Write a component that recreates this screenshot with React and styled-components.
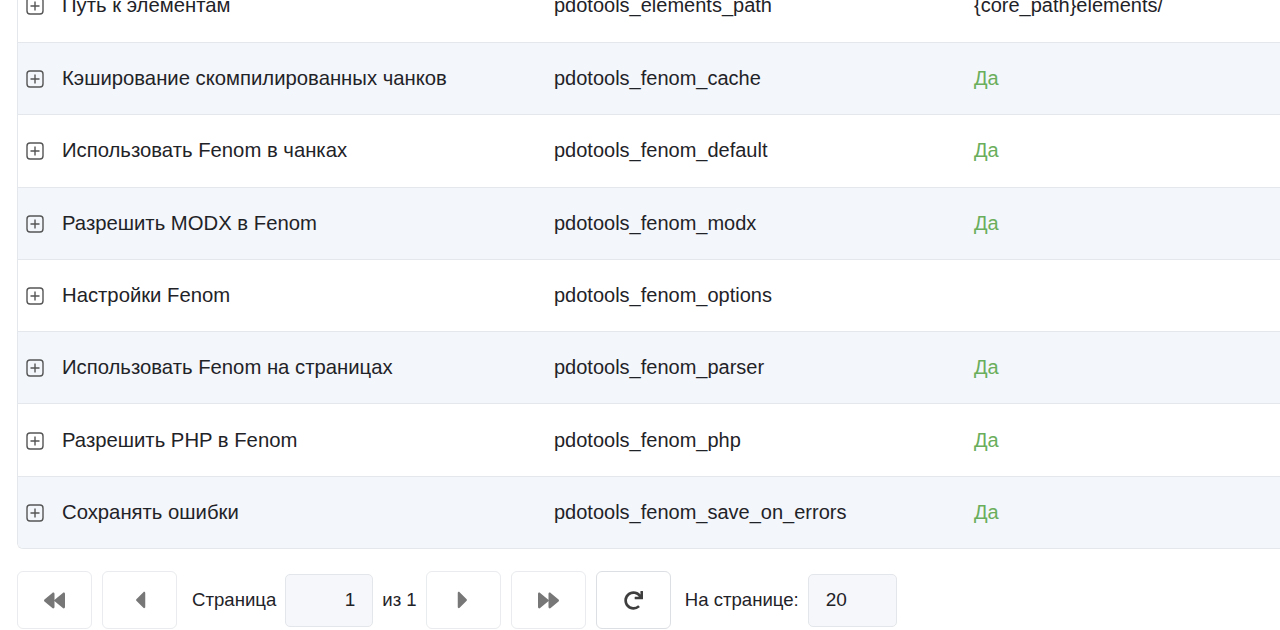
import React from 'react';
import styled, { createGlobalStyle } from 'styled-components';
import { FaBackward, FaCaretLeft, FaCaretRight, FaForward, FaRedo } from 'react-icons/fa';

const GlobalStyle = createGlobalStyle`
  html, body {
    margin: 0;
    padding: 0;
    background: #ffffff;
    overflow: hidden;
  }
  body {
    font-family: "Liberation Sans", Arial, sans-serif;
    color: #1f2328;
  }
`;

const settings = [
  { name: 'Путь к элементам', key: 'pdotools_elements_path', value: '{core_path}elements/' },
  { name: 'Кэширование скомпилированных чанков', key: 'pdotools_fenom_cache', value: 'Да', yes: true },
  { name: 'Использовать Fenom в чанках', key: 'pdotools_fenom_default', value: 'Да', yes: true },
  { name: 'Разрешить MODX в Fenom', key: 'pdotools_fenom_modx', value: 'Да', yes: true },
  { name: 'Настройки Fenom', key: 'pdotools_fenom_options', value: '' },
  { name: 'Использовать Fenom на страницах', key: 'pdotools_fenom_parser', value: 'Да', yes: true },
  { name: 'Разрешить PHP в Fenom', key: 'pdotools_fenom_php', value: 'Да', yes: true },
  { name: 'Сохранять ошибки', key: 'pdotools_fenom_save_on_errors', value: 'Да', yes: true },
];

function App() {
  return (
    <>
      <GlobalStyle />
      <Page>
        <Grid>
          {settings.map((s, i) => (
            <Row key={s.key} $striped={i % 2 === 1} $first={i === 0}>
              <Expander>
                <svg width="18" height="18" viewBox="0 0 18 18">
                  <rect x="1" y="1" width="16" height="16" rx="3" fill="none" stroke="#555" strokeWidth="1.4" />
                  <path d="M9 4.5v9M4.5 9h9" stroke="#555" strokeWidth="1.4" />
                </svg>
              </Expander>
              <NameCell>{s.name}</NameCell>
              <KeyCell>{s.key}</KeyCell>
              <ValueCell $yes={s.yes}>{s.value}</ValueCell>
            </Row>
          ))}
        </Grid>

        <Toolbar>
          <PageButton disabled><FaBackward size={21} /></PageButton>
          <PageButton disabled $gap={15}><FaCaretLeft size={28} /></PageButton>
          <Label>Страница</Label>
          <Field $align="right" defaultValue="1" $width={88} />
          <Label>из 1</Label>
          <PageButton disabled><FaCaretRight size={28} /></PageButton>
          <PageButton disabled><FaForward size={21} /></PageButton>
          <PageButton $active $gap={14}><FaRedo size={19} /></PageButton>
          <Label>На странице:</Label>
          <Field $align="left" defaultValue="20" $width={89} />
        </Toolbar>
      </Page>
    </>
  );
}

const Page = styled.div`
  padding-left: 17px;
  height: 630px;
  display: flex;
  flex-direction: column;
`;

const Grid = styled.div`
  margin-top: -30.3px;
  margin-right: -20px;
  border-left: 1px solid #e4e7eb;
  border-bottom: 1px solid #e4e7eb;
  border-bottom-left-radius: 6px;
  overflow: hidden;
`;

const Row = styled.div`
  display: grid;
  grid-template-columns: 44px 492px 420px 1fr;
  align-items: center;
  height: 72.3px;
  box-sizing: border-box;
  border-top: ${p => (p.$first ? 'none' : '1px solid #e4e7eb')};
  background: ${p => (p.$striped ? '#f3f6fa' : '#ffffff')};
  font-size: 20px;
`;

const Expander = styled.div`
  display: flex;
  align-items: center;
  padding-left: 8px;
  padding-top: 1px;
`;

const NameCell = styled.div`
  white-space: nowrap;
  color: #1f2328;
  font-size: 20.3px;
`;

const KeyCell = styled.div`
  white-space: nowrap;
  color: #1f2328;
`;

const ValueCell = styled.div`
  white-space: nowrap;
  color: ${p => (p.$yes ? '#6aae5c' : '#1f2328')};
`;

const Toolbar = styled.div`
  display: flex;
  align-items: center;
  margin-top: 22px;
  font-size: 18.6px;
`;

const PageButton = styled.button`
  width: 75px;
  height: 58px;
  box-sizing: border-box;
  margin-right: ${p => p.$gap || 10}px;
  border: 1px solid ${p => (p.$active ? '#dcdfe3' : '#e9ebee')};
  border-radius: 6px;
  background: #ffffff;
  display: flex;
  align-items: center;
  justify-content: center;
  color: ${p => (p.$active ? '#3e3e3e' : '#777777')};
  padding: 0;
  &:disabled {
    cursor: default;
  }
`;

const Label = styled.span`
  color: #1f2328;
  margin-right: 9px;
  white-space: nowrap;
`;

const Field = styled.input`
  width: ${p => p.$width}px;
  height: 53px;
  box-sizing: border-box;
  border: 1px solid #e3e6ea;
  border-radius: 5px;
  background: #f5f7fa;
  font-family: "Liberation Sans", Arial, sans-serif;
  font-size: 19px;
  color: #1f2328;
  text-align: ${p => p.$align};
  padding: 0 17px;
  margin-right: 9px;
  outline: none;
`;

export default App;
